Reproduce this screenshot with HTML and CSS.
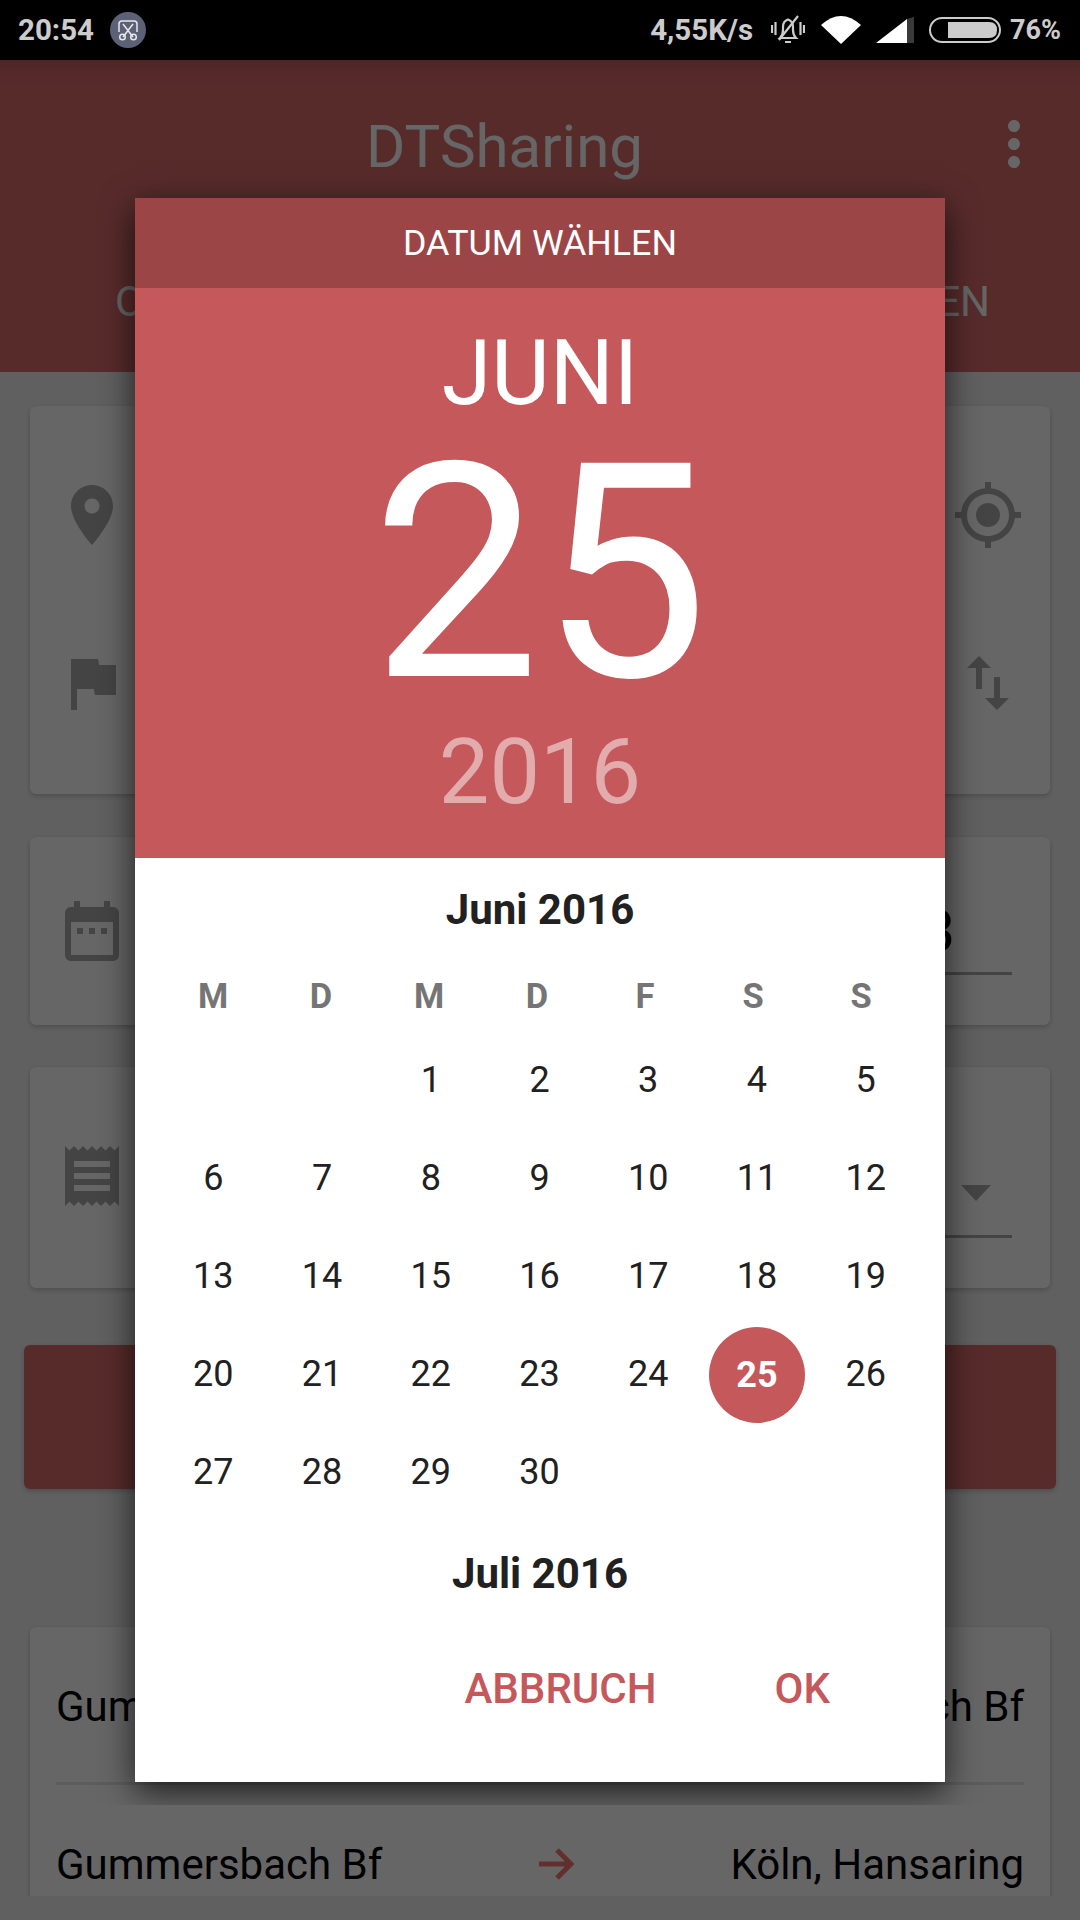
FILE: index.html
```html
<!DOCTYPE html>
<html lang="de">
<head>
<meta charset="utf-8">
<title>DTSharing</title>
<link rel="stylesheet" href="styles.css">
</head>
<body>
<div class="screen">
  <header class="status">
    <div class="status-left">
      <span class="clock">20:54</span>
      <svg class="badge" viewBox="0 0 36 36">
        <circle cx="18" cy="18" r="18" fill="#5c6178"/>
        <path d="M9 20V12q0-3 3-3h12q3 0 3 3v8M13 12l10 13M23 12L13 25" fill="none" stroke="#e8e8e8" stroke-width="1.5"/>
        <circle cx="12.5" cy="25" r="2.8" fill="none" stroke="#e8e8e8" stroke-width="1.5"/>
        <circle cx="23.5" cy="25" r="2.8" fill="none" stroke="#e8e8e8" stroke-width="1.5"/>
      </svg>
    </div>
    <div class="status-right">
      <span class="speed">4,55K/s</span>
      <svg class="ico-bell" viewBox="0 0 34 32" fill="none" stroke="#ccc" stroke-width="2.2">
        <path d="M9 24q3-3 3-8v-3q0-6 5-7.500q5 1.500 5 7.500v3q0 5 3 8z"/>
        <path d="M14 28h6M27 2L8 26M1 11v8M4.500 8v13M33 11v8M29.500 8v13"/>
      </svg>
      <svg class="ico-wifi" viewBox="0 0 40 28"><path d="M0 9Q20-9 40 9L20 28z" fill="#fff"/></svg>
      <svg class="ico-signal" viewBox="0 0 38 26"><path d="M0 26L31 2v24z" fill="#fff"/><path d="M31 2l7-2v26h-7z" fill="#3a3a3a"/></svg>
      <svg class="ico-battery" viewBox="0 0 72 26">
        <rect x="1" y="1" width="70" height="24" rx="12" fill="none" stroke="#ccc" stroke-width="2"/>
        <path d="M19 5h41q8 0 8 8t-8 8H19z" fill="#ccc"/>
      </svg>
      <span class="percent">76%</span>
    </div>
  </header>

  <div class="app">
    <div class="appbar">
      <div class="appbar-top">
        <h1 class="title">DTSharing</h1>
        <svg class="icon-72 more" viewBox="0 0 24 24"><path fill="#fff" d="M12 8c1.100 0 2-.9 2-2s-.9-2-2-2-2 .9-2 2 .9 2 2 2zm0 2c-1.100 0-2 .9-2 2s.9 2 2 2 2-.9 2-2-.9-2-2-2zm0 6c-1.100 0-2 .9-2 2s.9 2 2 2 2-.9 2-2-.9-2-2-2z"/></svg>
      </div>
      <div class="tabs"><span>ORTE</span><span>SUCHEN</span></div>
    </div>

    <main class="content">
      <section class="card card-route">
        <div class="icon-row">
          <svg class="icon-72" viewBox="0 0 24 24"><path d="M12 2C8.130 2 5 5.130 5 9c0 5.250 7 13 7 13s7-7.750 7-13c0-3.870-3.130-7-7-7zm0 9.500c-1.380 0-2.500-1.120-2.500-2.500s1.120-2.500 2.500-2.500 2.500 1.120 2.500 2.500-1.120 2.500-2.500 2.500z"/></svg>
          <svg class="icon-72" viewBox="0 0 24 24"><path d="M12 8c-2.210 0-4 1.790-4 4s1.790 4 4 4 4-1.790 4-4-1.790-4-4-4zm8.940 3c-.46-4.170-3.770-7.480-7.940-7.940V1h-2v2.060C6.830 3.520 3.520 6.830 3.060 11H1v2h2.060c.46 4.170 3.770 7.480 7.940 7.940V23h2v-2.060c4.170-.46 7.480-3.770 7.940-7.940H23v-2h-2.060zM12 19c-3.870 0-7-3.130-7-7s3.130-7 7-7 7 3.130 7 7-3.130 7-7 7z"/></svg>
        </div>
        <div class="icon-row">
          <svg class="icon-72" viewBox="0 0 24 24"><path d="M14.400 6L14 4H5v17h2v-7h5.600l.4 2h7V6z"/></svg>
          <svg class="icon-72" viewBox="0 0 24 24"><path d="M16 17.010V10h-2v7.010h-3L15 21l4-3.990h-3zM9 3L5 6.990h3V14h2V6.990h3L9 3z"/></svg>
        </div>
      </section>

      <section class="card card-date">
        <svg class="icon-72" viewBox="0 0 24 24"><path d="M9 11H7v2h2v-2zm4 0h-2v2h2v-2zm4 0h-2v2h2v-2zm2-7h-1V2h-2v2H8V2H6v2H5c-1.110 0-1.990.9-1.990 2L3 20c0 1.100.89 2 2 2h14c1.100 0 2-.9 2-2V6c0-1.100-.9-2-2-2zm0 16H5V9h14v11z"/></svg>
        <div class="field field-date">20:53</div>
      </section>

      <section class="card card-kind">
        <svg class="icon-72" viewBox="0 0 24 24"><path d="M18 17H6v-2h12v2zm0-4H6v-2h12v2zm0-4H6V7h12v2zM3 22l1.500-1.500L6 22l1.500-1.500L9 22l1.500-1.500L12 22l1.500-1.500L15 22l1.500-1.500L18 22l1.500-1.500L21 22V2l-1.500 1.500L18 2l-1.500 1.500L15 2l-1.500 1.500L12 2l-1.500 1.500L9 2 7.500 3.500 6 2 4.500 3.500 3 2v20z"/></svg>
        <div class="field field-kind"><span class="caret"></span></div>
      </section>

      <button class="search-button" type="button"></button>

      <section class="card card-list">
        <div class="route-row">
          <span>Gummersbach Bf</span>
          <svg class="arrow" viewBox="0 0 36 32"><path d="M1 16h32M19 2l14 14-14 14" fill="none" stroke="currentColor" stroke-width="5"/></svg>
          <span>Gummersbach Bf</span>
        </div>
        <div class="route-row">
          <span>Gummersbach Bf</span>
          <svg class="arrow" viewBox="0 0 36 32"><path d="M1 16h32M19 2l14 14-14 14" fill="none" stroke="currentColor" stroke-width="5"/></svg>
          <span>Köln, Hansaring</span>
        </div>
      </section>
    </main>
  </div>

  <div class="scrim"></div>

  <div class="dialog">
    <div class="dialog-title">DATUM WÄHLEN</div>
    <div class="date-head">
      <div class="date-month">JUNI</div>
      <div class="date-day">25</div>
      <div class="date-year">2016</div>
    </div>
    <div class="month-label">Juni 2016</div>
    <div class="week weekdays">
      <span>M</span><span>D</span><span>M</span><span>D</span><span>F</span><span>S</span><span>S</span>
    </div>
    <div class="week days">
      <span></span><span></span><span>1</span><span>2</span><span>3</span><span>4</span><span>5</span>
      <span>6</span><span>7</span><span>8</span><span>9</span><span>10</span><span>11</span><span>12</span>
      <span>13</span><span>14</span><span>15</span><span>16</span><span>17</span><span>18</span><span>19</span>
      <span>20</span><span>21</span><span>22</span><span>23</span><span>24</span><span class="selected"><b>25</b></span><span>26</span>
      <span>27</span><span>28</span><span>29</span><span>30</span><span></span><span></span><span></span>
    </div>
    <div class="month-label next">Juli 2016</div>
    <div class="actions"><span>ABBRUCH</span><span>OK</span></div>
  </div>
</div>
</body>
</html>
```
FILE: styles.css
```css
* { box-sizing: border-box; }
html, body { margin: 0; padding: 0; }
body { font-family: Roboto, "Noto Sans", sans-serif; background: #f0f0f0; }

.screen {
  position: relative;
  width: 1080px;
  height: 1920px;
  display: flex;
  flex-direction: column;
  overflow: hidden;
  background: #f0f0f0;
}

/* status bar */
.status {
  position: relative;
  z-index: 3;
  flex: 0 0 60px;
  height: 60px;
  background: #000;
  color: #ccc;
  display: flex;
  justify-content: space-between;
  align-items: center;
  padding: 0 19px 0 18px;
  font-weight: 700;
  font-size: 27px;
}
.status-left, .status-right { display: flex; align-items: center; }
.clock { font-size: 29.5px; }
.badge { width: 36px; height: 36px; margin-left: 16px; }
.speed { font-size: 29.5px; margin-right: 18px; }
.ico-bell { width: 34px; height: 32px; margin-right: 16px; }
.ico-wifi { width: 40px; height: 28px; margin-right: 15px; }
.ico-signal { width: 38px; height: 26px; margin-right: 15px; }
.ico-battery { width: 72px; height: 26px; margin-right: 9px; }

/* app behind the dialog */
.app { flex: 1; display: flex; flex-direction: column; overflow: hidden; margin-bottom: 24px; }
.appbar {
  flex: 0 0 312px;
  background: #dc6c6c;
  box-shadow: inset 0 30px 30px -30px rgba(0,0,0,.25);
  color: #fff;
}
.appbar-top {
  height: 217px;
  padding: 48px 30px 0 366px;
  display: flex;
  justify-content: space-between;
  align-items: flex-start;
}
.title { margin: 3px 0 0; font-size: 60px; font-weight: 400; line-height: 72px; }
.tabs {
  display: flex;
  justify-content: space-between;
  padding: 0 90px 0 115px;
  font-size: 42px;
  line-height: 50px;
}
.icon-72 { width: 72px; height: 72px; flex: none; display: block; fill: #aaa; }
.more { fill: #fff; }

.content { display: flex; flex-direction: column; padding: 0 30px; }
.card {
  background: #fff;
  border-radius: 6px;
  box-shadow: 0 2px 5px rgba(0,0,0,.2);
  flex: none;
}
.card-route {
  margin-top: 34px;
  height: 388px;
  padding: 73px 26px 0;
  display: flex;
  flex-direction: column;
  gap: 96px;
}
.icon-row { display: flex; justify-content: space-between; }

.card-date, .card-kind { display: flex; align-items: flex-start; padding: 0 38px 0 26px; }
.card-date { margin-top: 43px; height: 188px; padding-top: 58px; }
.card-kind { margin-top: 42px; height: 221px; padding-top: 73px; }
.field {
  flex: 1;
  display: flex;
  justify-content: flex-end;
  margin-left: 60px;
  border-bottom: 3px solid #aaa;
  color: #000;
}
.field-date { height: 80px; align-items: center; font-size: 58px; padding: 0 57px 5px 0; }
.field-kind { height: 98px; padding: 45px 21px 0 0; }
.caret {
  width: 0;
  height: 0;
  border-left: 15px solid transparent;
  border-right: 15px solid transparent;
  border-top: 16px solid #aaa;
}

.search-button {
  flex: none;
  margin: 57px -6px 0;
  height: 144px;
  border: 0;
  border-radius: 6px;
  background: #dc6c6c;
  box-shadow: 0 2px 5px rgba(0,0,0,.2);
}

.card-list { margin-top: 138px; padding: 0 26px; }
.route-row {
  height: 158px;
  display: flex;
  justify-content: space-between;
  align-items: center;
  font-size: 42px;
  color: #000;
  border-bottom: 3px solid #e6e6e6;
  padding-top: 4px;
}
.route-row + .route-row { height: 156px; padding-top: 2px; border-bottom: 0; }
.arrow { width: 36px; height: 32px; color: #f47474; }

.scrim {
  position: absolute;
  inset: 60px 0 0;
  z-index: 1;
  background: rgba(0,0,0,.6);
}

/* dialog */
.dialog {
  position: absolute;
  z-index: 2;
  left: 135px;
  top: 198px;
  width: 810px;
  height: 1584px;
  background: #fff;
  box-shadow: 0 10px 32px rgba(0,0,0,.7);
  clip-path: inset(-40px -40px -23px -40px);
  display: flex;
  flex-direction: column;
}
.dialog-title {
  flex: 0 0 90px;
  background: #9c4546;
  color: #fff;
  font-size: 35.8px;
  line-height: 90px;
  text-align: center;
}
.date-head {
  flex: 0 0 570px;
  padding-top: 25px;
  background: #c4585a;
  color: #fff;
  text-align: center;
}
.date-month { font-size: 90px; line-height: 122px; }
.date-day { font-size: 300px; line-height: 278px; }
.date-year { font-size: 90px; line-height: 120px; color: rgba(255,255,255,.5); }
.month-label {
  flex: 0 0 102px;
  font-size: 42px;
  font-weight: 700;
  line-height: 103px;
  text-align: center;
  color: #212121;
}
.month-label.next { flex-basis: 104px; line-height: 105px; }
.week {
  display: grid;
  grid-template-columns: repeat(7, 1fr);
  padding: 0 25px 0 24px;
  text-align: center;
}
.weekdays {
  flex: 0 0 70px;
  padding-right: 30px;
  font-size: 34.5px;
  font-weight: 700;
  line-height: 70px;
  color: #757575;
}
.days {
  flex: 0 0 490px;
  grid-auto-rows: 98px;
  font-size: 36px;
  color: #212121;
}
.days span { display: flex; align-items: center; justify-content: center; }
.days .selected { padding-top: 1px; }
.selected b {
  width: 96px;
  height: 96px;
  border-radius: 50%;
  background: #c4585a;
  color: #fff;
  display: flex;
  align-items: center;
  justify-content: center;
  font-weight: 700;
}
.actions {
  height: 126px;
  display: flex;
  justify-content: flex-end;
  align-items: center;
  gap: 118px;
  padding: 0 115px 2px 0;
  font-size: 42px;
  font-weight: 500;
  color: #c4585a;
}
```
